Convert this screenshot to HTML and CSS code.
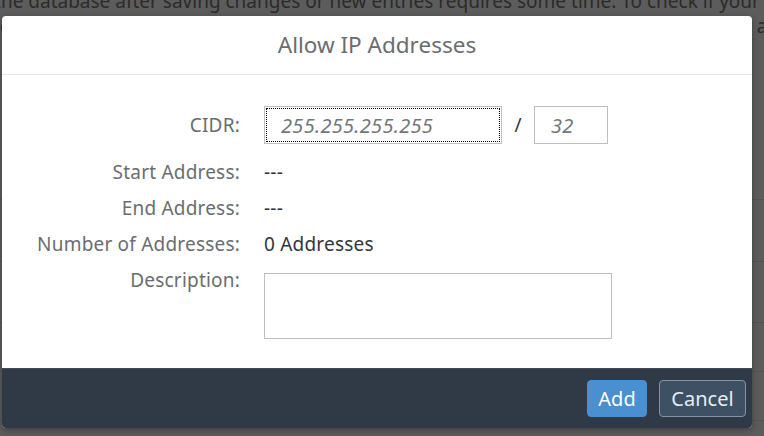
FILE: index.html
```html
<!DOCTYPE html>
<html lang="en">
<head>
    <meta charset="UTF-8">
    <meta name="viewport" content="width=device-width, initial-scale=1.0">
    <title>Allow IP Addresses</title>
    <link rel="stylesheet" href="styles.css">
</head>
<body>
    <div id="page">
        <p class="intro">Updating the database after saving changes or new entries requires some time. To check if your<br>changes have been applied, refresh the list of allowed addresses after a few minutes and check the status</p>
        <div class="rows">
            <div class="row"></div>
            <div class="row"></div>
            <div class="row"></div>
            <div class="row"></div>
            <div class="row"></div>
        </div>
    </div>

    <div id="overlay"></div>

    <div id="dialog">
        <div class="dialog-header">Allow IP Addresses</div>
        <div class="dialog-content">
            <div class="form">
                <label class="form-label tall">CIDR:</label>
                <div class="cidr">
                    <input type="text" class="input ip-input focused" placeholder="255.255.255.255">
                    <span class="slash">/</span>
                    <input type="text" class="input mask-input" placeholder="32">
                </div>

                <label class="form-label">Start Address:</label>
                <div class="form-value">---</div>

                <label class="form-label">End Address:</label>
                <div class="form-value">---</div>

                <label class="form-label">Number of Addresses:</label>
                <div class="form-value">0 Addresses</div>

                <label class="form-label">Description:</label>
                <textarea class="input description"></textarea>
            </div>
        </div>
        <div class="dialog-footer">
            <button class="btn btn-emphasized">Add</button>
            <button class="btn btn-default">Cancel</button>
        </div>
    </div>
</body>
</html>
```

FILE: styles.css
```css
body {
    margin: 0;
    font-family: "Noto Sans", "Open Sans", Arial, sans-serif;
    background-color: #ffffff;
    overflow: hidden;
    height: 436px;
}

#page {
    color: #777777;
    height: 436px;
    overflow: hidden;
}

.intro {
    margin: -11px 0 0 0;
    text-indent: -94px;
    white-space: nowrap;
    font-size: 19px;
    line-height: 25px;
}

.rows {
    margin-top: 112px;
}

.row {
    height: 48px;
    border-bottom: 1px solid #e5e5e5;
}

.row:nth-child(2) {
    height: 61px;
}

.row:nth-child(3) {
    height: 60px;
}

#overlay {
    position: absolute;
    top: 0;
    left: 0;
    right: 0;
    bottom: 0;
    background-color: rgba(0, 0, 0, 0.64);
}

#dialog {
    position: absolute;
    left: 2px;
    top: 16px;
    width: 750px;
    height: 412px;
    background-color: #ffffff;
    border-radius: 4px;
    overflow: hidden;
    display: flex;
    flex-direction: column;
    box-shadow: 0 2px 6px rgba(0, 0, 0, 0.3);
}

.dialog-header {
    height: 58px;
    line-height: 58px;
    text-align: center;
    font-size: 22.5px;
    color: #6a6d70;
    border-bottom: 1px solid #e5e5e5;
    flex-shrink: 0;
}

.dialog-content {
    flex: 1;
    padding-top: 31px;
}

.form {
    display: grid;
    grid-template-columns: 238px auto;
    column-gap: 24px;
    row-gap: 12px;
    align-items: start;
}

.form-label {
    text-align: right;
    font-size: 19px;
    letter-spacing: 0.2px;
    color: #6a6d70;
    line-height: 24px;
}

.form-label.tall {
    line-height: 38px;
}

.form-value {
    font-size: 19px;
    letter-spacing: 0.2px;
    color: #32363a;
    line-height: 24px;
}

.cidr {
    display: flex;
    align-items: center;
    margin-bottom: 4px;
}

.input {
    box-sizing: border-box;
    border: 1px solid #bfbfbf;
    background: #ffffff;
    font-family: inherit;
    font-size: 20px;
    letter-spacing: 0.3px;
    color: #32363a;
    margin: 0;
}

.input::placeholder {
    color: #74777a;
    font-style: italic;
}

.ip-input {
    width: 238px;
    height: 38px;
    padding: 0 16px;
}

.focused {
    outline: 1px dotted #000000;
    outline-offset: -3px;
}

.slash {
    width: 32px;
    text-align: center;
    font-size: 19px;
    color: #32363a;
}

.mask-input {
    width: 74px;
    height: 38px;
    padding: 0 16px;
}

.description {
    width: 348px;
    height: 66px;
    resize: none;
    margin-top: 5px;
}

.dialog-footer {
    height: 60px;
    background-color: #2f3a46;
    border-top: 1px solid #3d4b5a;
    display: flex;
    justify-content: flex-end;
    align-items: center;
    gap: 12px;
    padding-right: 6px;
    box-sizing: border-box;
}

.btn {
    font-family: inherit;
    font-size: 20px;
    height: 37px;
    border-radius: 4px;
    padding: 0 10px;
    cursor: pointer;
}

.btn-emphasized {
    width: 60px;
    background-color: #4a8fcf;
    border: 1px solid #4a8fcf;
    color: #ffffff;
}

.btn-default {
    width: 87px;
    background-color: #3e5063;
    border: 1px solid #8394a8;
    color: #e6edf3;
}
```
